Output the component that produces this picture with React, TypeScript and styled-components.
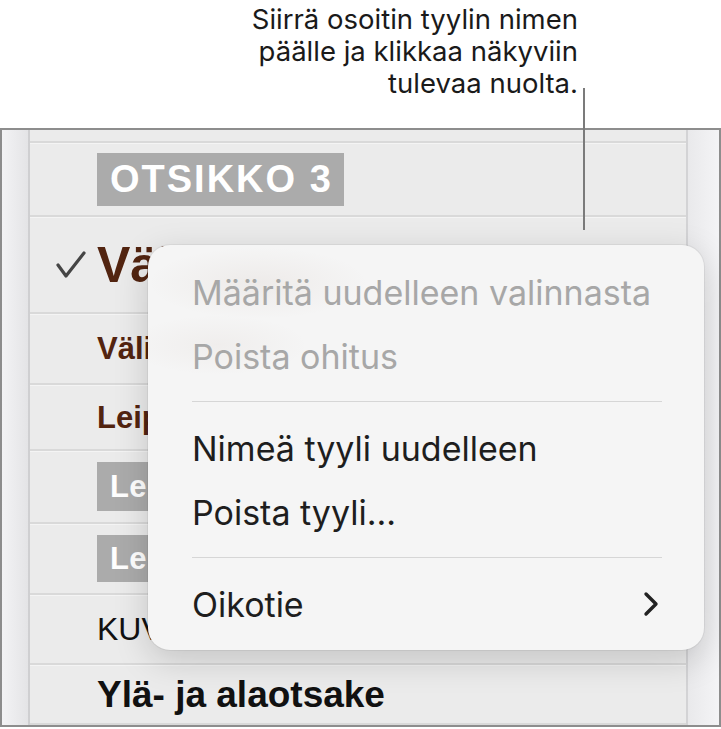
import React from 'react'
import styled, { createGlobalStyle } from 'styled-components'

const GlobalStyle = createGlobalStyle`
  html, body {
    margin: 0;
    padding: 0;
    background: #ffffff;
  }
  * {
    box-sizing: border-box;
  }
`

const Page = styled.div`
  position: relative;
  width: 721px;
  height: 729px;
  display: flex;
  flex-direction: column;
  overflow: hidden;
`

const Callout = styled.div`
  height: 128px;
  padding: 3px 143px 0 0;
  text-align: right;
  font-family: Inter, 'Noto Sans', sans-serif;
  font-size: 27.5px;
  line-height: 32px;
  color: #1a1a1a;
`

const Leader = styled.div`
  position: absolute;
  left: 583px;
  top: 88px;
  width: 2px;
  height: 142px;
  background: #7b7b7b;
`

const Frame = styled.div`
  height: 599px;
  display: grid;
  grid-template-columns: 28px 1fr 33px;
  border: 2px solid #8d8d8d;
`

const Rail = styled.div<{ $side: 'left' | 'right' }>`
  background: ${(p) =>
    p.$side === 'left'
      ? 'linear-gradient(90deg, #f3f3f5 0%, #e4e4e6 100%)'
      : 'linear-gradient(90deg, #e9e9eb 0%, #f4f4f6 100%)'};
  ${(p) =>
    p.$side === 'left'
      ? 'border-right: 2px solid #cfcfd1;'
      : 'border-left: 2px solid #d3d3d5;'}
`

const List = styled.div`
  background: #ebebeb;
  display: flex;
  flex-direction: column;
  overflow: hidden;
`

const Row = styled.div<{ $h: number }>`
  flex: none;
  height: ${(p) => p.$h}px;
  display: grid;
  grid-template-columns: 67px 1fr;
  align-items: center;
  border-bottom: 2px solid #d9d9d9;
  box-shadow: 0 1px 0 #f4f4f4;
  white-space: nowrap;
  overflow: hidden;
`

const CheckCell = styled.div`
  padding-left: 26px;
  display: flex;
  align-items: center;
`

const StyleName = styled.span<{ $size: number; $weight?: number; $color?: string }>`
  font-family: 'Liberation Sans', Arial, sans-serif;
  font-size: ${(p) => p.$size}px;
  font-weight: ${(p) => p.$weight ?? 700};
  color: ${(p) => p.$color ?? '#111111'};
  line-height: 1;
`

const Tag = styled.span<{ $size: number; $h: number; $spacing?: number }>`
  justify-self: start;
  display: inline-flex;
  align-items: center;
  height: ${(p) => p.$h}px;
  padding: 0 11px 0 13px;
  background: #ababab;
  color: #ffffff;
  font-family: 'Liberation Sans', Arial, sans-serif;
  font-weight: 700;
  font-size: ${(p) => p.$size}px;
  letter-spacing: ${(p) => p.$spacing ?? 0.4}px;
`

const Menu = styled.div`
  position: absolute;
  left: 148px;
  top: 245px;
  width: 556px;
  height: 405px;
  padding: 15px 42px 12px 44px;
  border-radius: 22px;
  background:
    radial-gradient(ellipse 110px 36px at 110px 38px, rgba(140, 100, 80, 0.07), transparent),
    radial-gradient(ellipse 90px 30px at 70px 100px, rgba(140, 100, 80, 0.05), transparent),
    #f5f5f5;
  box-shadow: 0 10px 34px rgba(0, 0, 0, 0.17), 0 0 0 1px rgba(0, 0, 0, 0.05);
  display: flex;
  flex-direction: column;
`

const Item = styled.div<{ $disabled?: boolean }>`
  height: 64px;
  display: flex;
  align-items: center;
  justify-content: space-between;
  font-family: Inter, 'Noto Sans', sans-serif;
  font-size: 34px;
  color: ${(p) => (p.$disabled ? '#a7a7a7' : '#1e1e1e')};
  white-space: nowrap;
`

const Separator = styled.div`
  height: 1px;
  margin: 13px 0 14px;
  background: #d6d6d6;
`

const Check = () => (
  <svg width="30" height="30" viewBox="0 0 30 30">
    <polyline
      points="2,15 10,26 28,3"
      fill="none"
      stroke="#454545"
      strokeWidth="3.2"
      strokeLinecap="round"
      strokeLinejoin="round"
    />
  </svg>
)

const Chevron = () => (
  <svg width="18" height="26" viewBox="0 0 18 26" style={{ marginRight: 2 }}>
    <polyline
      points="4,3 14,13 4,23"
      fill="none"
      stroke="#222222"
      strokeWidth="3.4"
      strokeLinecap="round"
      strokeLinejoin="round"
    />
  </svg>
)

const brown = '#522410'

export default function App() {
  return (
    <Page>
      <GlobalStyle />
      <Callout>
        Siirrä osoitin tyylin nimen
        <br />
        päälle ja klikkaa näkyviin
        <br />
        tulevaa nuolta.
      </Callout>
      <Frame>
        <Rail $side="left" />
        <List>
          <Row $h={13} />
          <Row $h={74}>
            <span />
            <Tag $size={38} $h={53} $spacing={2}>
              OTSIKKO 3
            </Tag>
          </Row>
          <Row $h={97}>
            <CheckCell>
              <Check />
            </CheckCell>
            <StyleName $size={50} $color={brown}>
              Väliotsikko
            </StyleName>
          </Row>
          <Row $h={71}>
            <span />
            <StyleName $size={31} $color={brown}>
              Väliotsikko 2
            </StyleName>
          </Row>
          <Row $h={66}>
            <span />
            <StyleName $size={31} $color={brown}>
              Leipäteksti
            </StyleName>
          </Row>
          <Row $h={73}>
            <span />
            <Tag $size={31} $h={49}>
              Leipäteksti
            </Tag>
          </Row>
          <Row $h={71}>
            <span />
            <Tag $size={31} $h={47}>
              Leipäteksti 2
            </Tag>
          </Row>
          <Row $h={70}>
            <span />
            <StyleName $size={32} $weight={400}>
              KUVATEKSTI
            </StyleName>
          </Row>
          <Row $h={60}>
            <span />
            <StyleName $size={37}>Ylä- ja alaotsake</StyleName>
          </Row>
        </List>
        <Rail $side="right" />
      </Frame>
      <Leader />
      <Menu>
        <Item $disabled>Määritä uudelleen valinnasta</Item>
        <Item $disabled>Poista ohitus</Item>
        <Separator />
        <Item>Nimeä tyyli uudelleen</Item>
        <Item>Poista tyyli...</Item>
        <Separator />
        <Item>
          Oikotie
          <Chevron />
        </Item>
      </Menu>
    </Page>
  )
}
